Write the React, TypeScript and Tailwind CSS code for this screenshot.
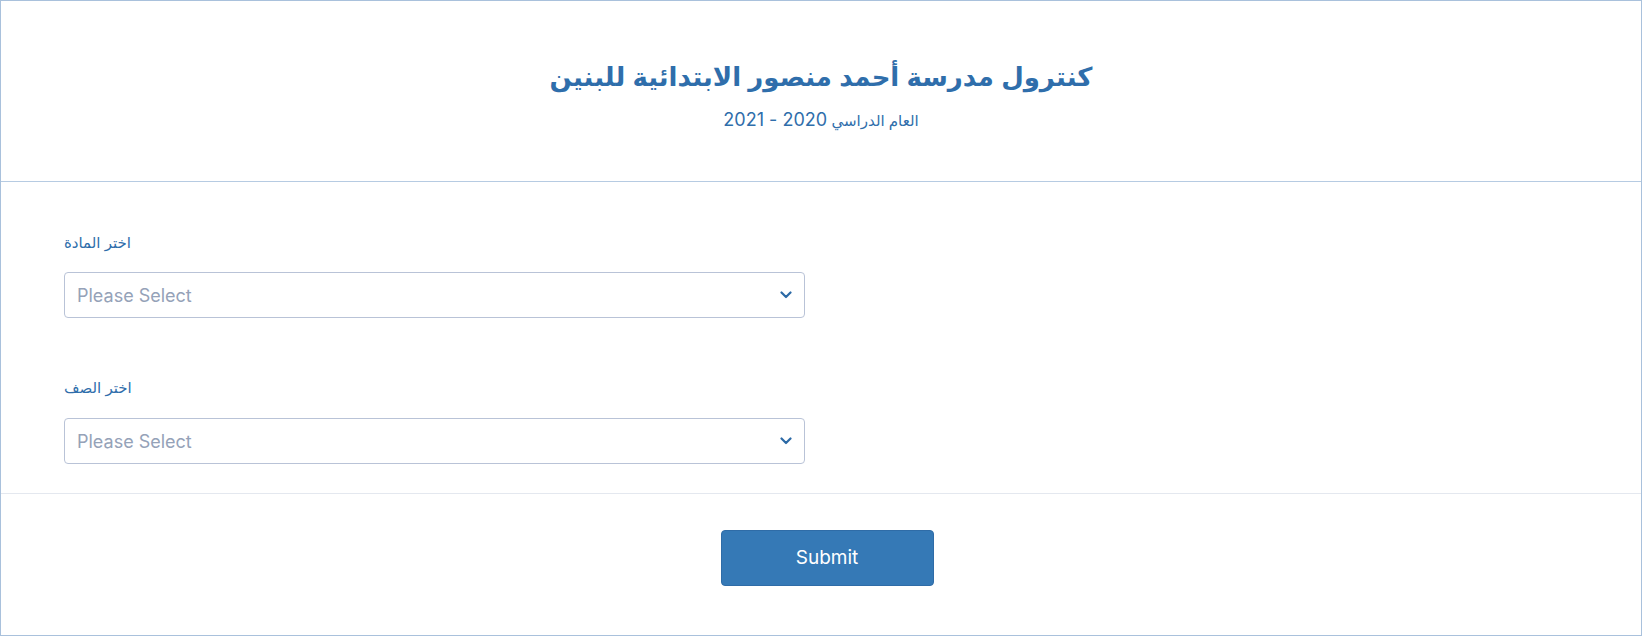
import React from "react";

function Chevron() {
  return (
    <svg width="12" height="8" viewBox="0 0 12 8" fill="none">
      <path d="M1.5 1.5 L6 6 L10.5 1.5" stroke="#2c6aa6" strokeWidth="2.2" strokeLinecap="round" strokeLinejoin="round" />
    </svg>
  );
}

function SelectBox() {
  return (
    <div className="flex h-[46px] w-[741px] items-center justify-between rounded-[4px] border border-[#b9c3d7] bg-white pl-[12px] pr-[12px]">
      <span className="text-[18px] text-[#95a2b8]" style={{ fontFamily: "Inter, 'Liberation Sans', sans-serif" }}>
        Please Select
      </span>
      <Chevron />
    </div>
  );
}

export default function App() {
  const arabic = "'Liberation Sans', 'DejaVu Sans', sans-serif";
  return (
    <div className="flex h-[636px] w-[1642px] flex-col border border-[#a9c1dc] bg-white" style={{ fontFamily: arabic }}>
      <div className="flex h-[181px] shrink-0 flex-col items-center border-b border-[#b6cbe2] pt-[58px]">
        <h1 dir="rtl" className="text-[26px] font-bold leading-[36px] text-[#2f6eab]">
          كنترول مدرسة أحمد منصور الابتدائية للبنين
        </h1>
        <p dir="rtl" className="mt-[13px] leading-[24px] text-[#2f6eab]">
          <span className="text-[15px]">العام الدراسي</span>{" "}
          <span className="text-[18px]" style={{ fontFamily: "Inter, 'Liberation Sans', sans-serif" }}>2020 - 2021</span>
        </p>
      </div>
      <div className="flex flex-col border-b border-[#e4e8ef] pb-[29px] pl-[63px] pt-[51px]">
        <label dir="rtl" className="self-start text-[15px] leading-[20px] text-[#2f6eab]">اختر المادة</label>
        <div className="mt-[19px]">
          <SelectBox />
        </div>
        <label dir="rtl" className="mt-[60px] self-start text-[15px] leading-[20px] text-[#2f6eab]">اختر الصف</label>
        <div className="mt-[20px]">
          <SelectBox />
        </div>
      </div>
      <div className="flex flex-1 justify-center pl-[12px] pt-[36px]">
        <button
          className="h-[56px] w-[213px] rounded-[4px] border border-[#2f6ca7] bg-[#3579b6] text-[19px] text-white"
          style={{ fontFamily: "Inter, 'Liberation Sans', sans-serif" }}
        >
          Submit
        </button>
      </div>
    </div>
  );
}
